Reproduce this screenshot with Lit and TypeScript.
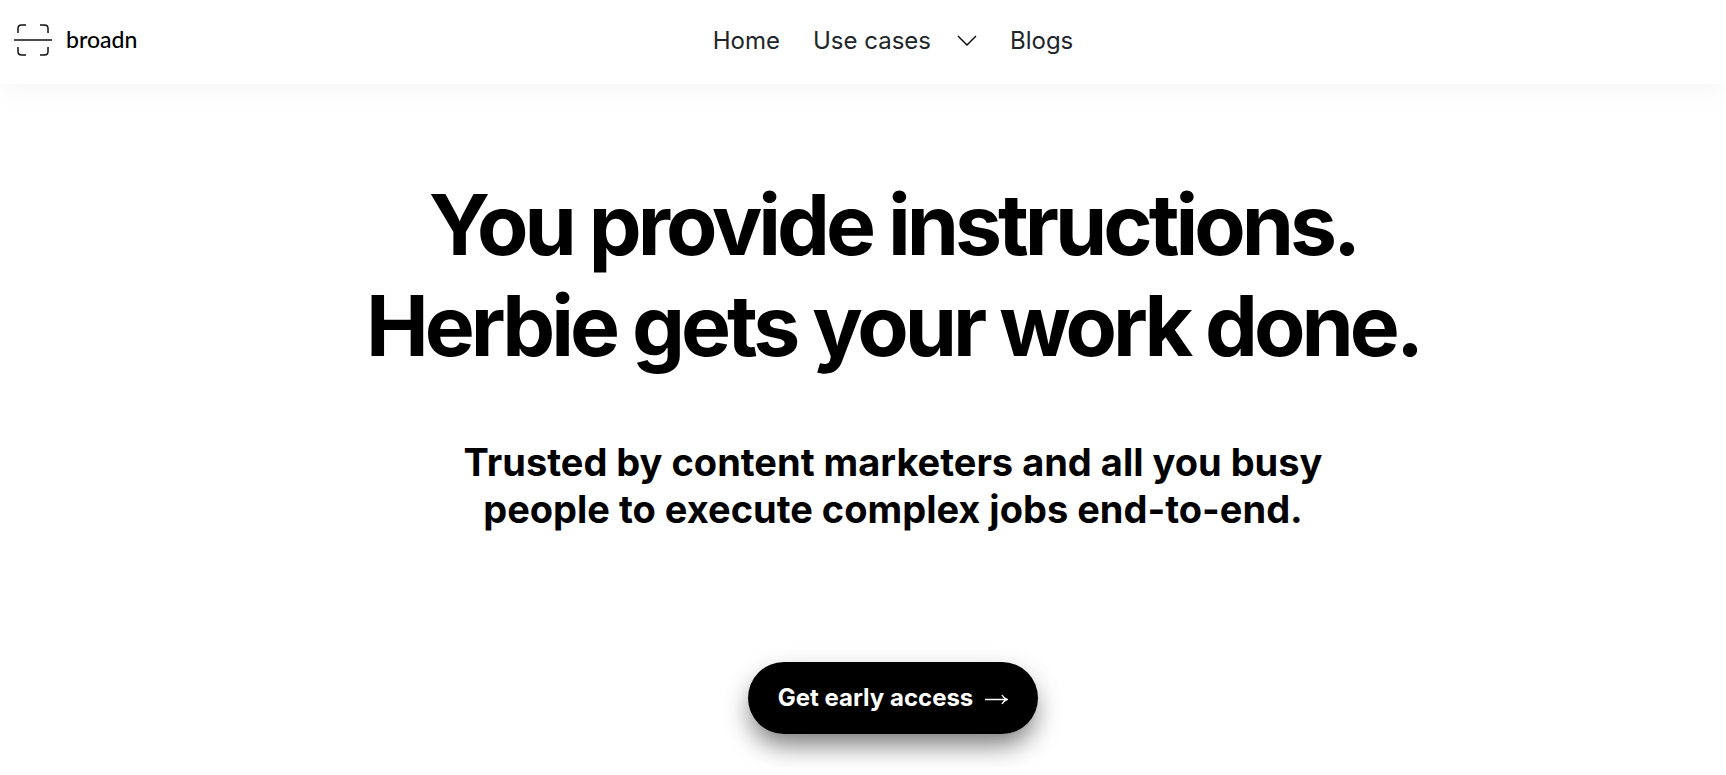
import { LitElement, html, css } from "lit";
import { customElement } from "lit/decorators.js";

@customElement("app-root")
export class AppRoot extends LitElement {
  static styles = css`
    :host {
      display: block;
      background: #fff;
      color: #000;
      font-family: Inter, "Liberation Sans", sans-serif;
    }
    header {
      display: grid;
      grid-template-columns: 1fr auto 1fr;
      align-items: center;
      height: 84px;
      padding: 0 0 4px 60px;
      box-sizing: border-box;
      box-shadow: 0 8px 28px rgba(0, 0, 0, 0.04);
    }
    .brand {
      display: flex;
      align-items: center;
      gap: 14px;
      justify-self: start;
      margin-left: -46px;
      color: #000;
      text-decoration: none;
      font: 500 23px/28px Lato, sans-serif;
    }
    .brand span {
      padding-bottom: 2px;
    }
    .brand svg {
      display: block;
    }
    nav {
      display: flex;
      align-items: center;
      gap: 33px;
      padding-top: 2px;
      font-size: 24px;
      line-height: 32px;
    }
    nav a,
    .menu {
      color: #212529;
      text-decoration: none;
    }
    .menu {
      display: flex;
      align-items: center;
      gap: 26px;
      padding: 0;
      border: 0;
      background: none;
      font: inherit;
    }
    main {
      display: flex;
      flex-direction: column;
      align-items: center;
      padding: 90px 0 40px 60px;
      text-align: center;
    }
    h1 {
      margin: 0;
      font-size: 84px;
      line-height: 101px;
      font-weight: 700;
      letter-spacing: -4px;
    }
    h2 {
      margin: 63px 0 0;
      max-width: 900px;
      font-size: 38px;
      line-height: 47px;
      font-weight: 700;
    }
    .cta {
      display: flex;
      align-items: center;
      gap: 12px;
      height: 72px;
      margin-top: 129px;
      padding: 0 30px;
      border: 0;
      border-radius: 36px;
      background: #000;
      color: #fff;
      font: 700 24px/32px Inter, sans-serif;
      box-shadow: 0 14px 26px -4px rgba(0, 0, 0, 0.5), 0 8px 32px rgba(0, 0, 0, 0.08);
    }
  `;

  render() {
    return html`
      <header>
        <a class="brand" href="#">
          <svg width="38" height="32" viewBox="0 0 38 32" fill="none" stroke="#111" stroke-width="1.5" aria-hidden="true">
            <path d="M4 9V4.500q0-3.500 3.500-3.500H12M26 1h4.500q3.500 0 3.500 3.500V9M4 23v4.500q0 3.500 3.500 3.500H12M26 31h4.500q3.500 0 3.500-3.500V23M0 16h38" />
          </svg>
          <span>broadn</span>
        </a>
        <nav>
          <a href="#">Home</a>
          <button class="menu" type="button">
            Use cases
            <svg width="20" height="12" viewBox="0 0 20 12" fill="none" stroke="#000" stroke-width="1.4" aria-hidden="true">
              <path d="M1 1l9 9 9-9" />
            </svg>
          </button>
          <a href="#">Blogs</a>
        </nav>
      </header>
      <main>
        <h1>You provide instructions.<br />Herbie gets your work done.</h1>
        <h2>Trusted by content marketers and all you busy people to execute complex jobs end-to-end.</h2>
        <button class="cta" type="button">
          Get early access
          <svg width="23" height="14" viewBox="0 0 23 14" fill="none" stroke="#fff" stroke-width="1.4" aria-hidden="true">
            <path d="M0 8.500h22M17 4q2 3.500 5 4.500q-3 1-5 4.500" />
          </svg>
        </button>
      </main>
    `;
  }
}
